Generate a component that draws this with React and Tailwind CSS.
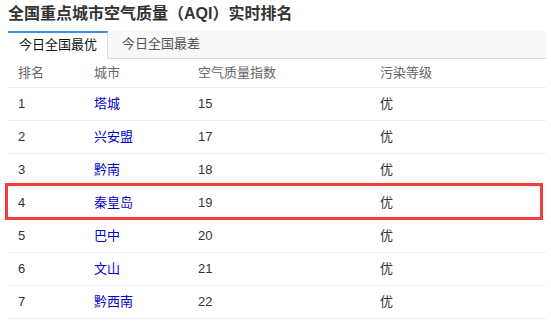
import React from "react";

const rows = [
  { rank: 1, city: "塔城", aqi: 15, level: "优" },
  { rank: 2, city: "兴安盟", aqi: 17, level: "优" },
  { rank: 3, city: "黔南", aqi: 18, level: "优" },
  { rank: 4, city: "秦皇岛", aqi: 19, level: "优" },
  { rank: 5, city: "巴中", aqi: 20, level: "优" },
  { rank: 6, city: "文山", aqi: 21, level: "优" },
  { rank: 7, city: "黔西南", aqi: 22, level: "优" },
];

const font = { fontFamily: '"Liberation Sans", "Noto Sans CJK SC", sans-serif' };

const App = () => {
  return (
    <div className="relative w-[551px] h-[323px] bg-white overflow-hidden" style={font}>
      <div className="pl-2 w-[546px]">
        {/* Title */}
        <h1 className="h-[31px] pt-[3px] text-[16px] leading-[22px] font-bold text-[#333]">
          全国重点城市空气质量（AQI）实时排名
        </h1>

        {/* Tabs */}
        <div className="flex h-[28px] bg-[#f8f8f8] border-b border-[#dcdcdc]">
          <div className="w-[100px] h-[28px] bg-white border-t-2 border-t-[#3b8fe8] border-r border-r-[#dcdcdc] text-[13px] leading-[24px] text-[#111] pl-[11px]">
            今日全国最优
          </div>
          <div className="text-[13px] leading-[26px] text-[#555] pl-[14px]">今日全国最差</div>
        </div>

        {/* Table */}
        <div className="text-[13px]">
          <div className="flex h-[29px] items-center border-b border-[#eeeeee] text-[#666] pl-[10px]">
            <div className="w-[76px]">排名</div>
            <div className="w-[104px]">城市</div>
            <div className="w-[182px]">空气质量指数</div>
            <div>污染等级</div>
          </div>
          {rows.map((r) => (
            <div key={r.rank} className="flex h-[33px] items-center border-b border-[#eeeeee] pl-[10px] text-[#333]">
              <div className="w-[76px]">{r.rank}</div>
              <div className="w-[104px] text-[#0000cc]">{r.city}</div>
              <div className="w-[182px]">{r.aqi}</div>
              <div>{r.level}</div>
            </div>
          ))}
        </div>
      </div>

      {/* highlight annotation */}
      <div className="absolute left-[5px] top-[183px] w-[538px] h-[37px] border-[3px] border-[#f23d3d]"></div>
    </div>
  );
};

export default App;
